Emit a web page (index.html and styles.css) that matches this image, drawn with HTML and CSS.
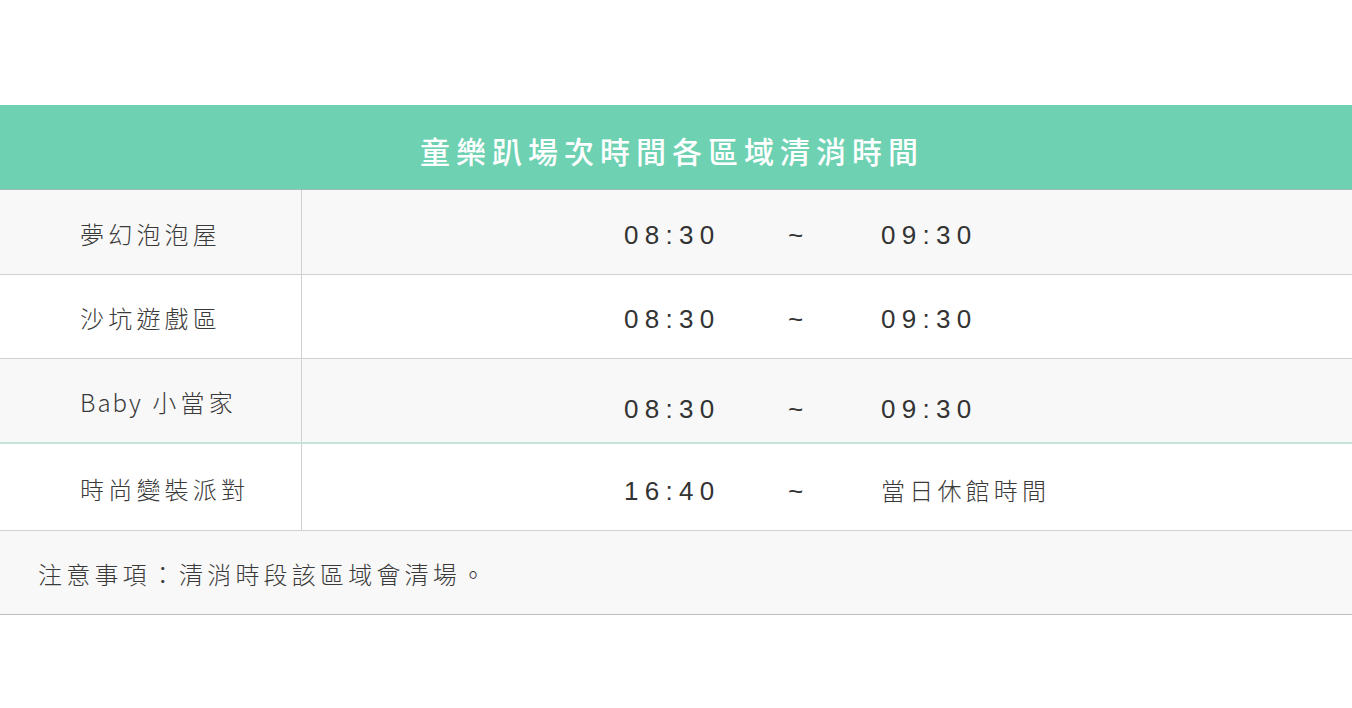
FILE: index.html
```html
<!DOCTYPE html>
<html lang="zh-Hant">
<head>
<meta charset="utf-8">
<title>童樂趴場次時間各區域清消時間</title>
<link rel="stylesheet" href="styles.css">
</head>
<body>
<div class="page">
  <div class="table">
    <div class="head">童樂趴場次時間各區域清消時間</div>
    <div class="row grey r1">
      <div class="name">夢幻泡泡屋</div>
      <div class="time"><span class="t start">08:30</span><span class="t tilde">~</span><span class="t end">09:30</span></div>
    </div>
    <div class="row r2">
      <div class="name">沙坑遊戲區</div>
      <div class="time"><span class="t start">08:30</span><span class="t tilde">~</span><span class="t end">09:30</span></div>
    </div>
    <div class="row grey r3">
      <div class="name"><span class="latin">Baby</span> 小當家</div>
      <div class="time low"><span class="t start">08:30</span><span class="t tilde">~</span><span class="t end">09:30</span></div>
    </div>
    <div class="row r4">
      <div class="name">時尚變裝派對</div>
      <div class="time"><span class="t start">16:40</span><span class="t tilde">~</span><span class="end cjk">當日休館時間</span></div>
    </div>
    <div class="note">注意事項：清消時段該區域會清場。</div>
  </div>
</div>
</body>
</html>
```

FILE: styles.css
```css
html, body {
  margin: 0;
  padding: 0;
  background: #ffffff;
}
.page {
  padding-top: 105px;
  width: 1352px;
}
.table {
  display: flex;
  flex-direction: column;
}
.head {
  background: #6dd1b2;
  border-bottom: 1px solid #9fbdb3;
  color: #ffffff;
  font-family: "Noto Sans CJK TC", sans-serif;
  font-weight: 500;
  font-size: 30px;
  letter-spacing: 6px;
  display: flex;
  align-items: center;
  justify-content: center;
  padding-top: 5px;
  box-sizing: border-box;
  height: 85px;
  padding-right: 8px;
}
.row {
  display: grid;
  grid-template-columns: 302px 1fr;
  border-bottom: 1px solid #d0d0d0;
  background: #ffffff;
}
.row.grey { background: #f8f8f8; }
.r1 { height: 84px; }
.r2 { height: 83px; }
.r3 { height: 83px; border-bottom: 2px solid #c4e3d9; }
.r4 { height: 86px; }
.name {
  border-right: 1px solid #d0d0d0;
  display: flex;
  align-items: center;
  padding-left: 80px;
  font-family: "Noto Sans CJK TC", sans-serif;
  font-weight: 300;
  font-size: 24px;
  letter-spacing: 4.2px;
  color: #3a3a3a;
  padding-top: 2px;
  white-space: pre;
}
.latin { letter-spacing: 2px; }
.time {
  display: flex;
  align-items: center;
  padding-left: 322px;
  color: #333333;
  padding-top: 6px;
}
.time.low { padding-top: 18px; }
.r4 .time { padding-top: 8px; }
.t {
  font-family: "Liberation Sans", Arial, sans-serif;
  font-size: 26px;
  letter-spacing: 6.3px;
}
.start { width: 162px; }
.tilde { width: 95px; padding-left: 2px; box-sizing: border-box; }
.cjk {
  font-family: "Noto Sans CJK TC", sans-serif;
  font-weight: 300;
  font-size: 24px;
  letter-spacing: 4.2px;
  color: #3a3a3a;
  margin-top: -3px;
}
.note {
  height: 84px;
  background: #f8f8f8;
  border-bottom: 1px solid #bcbcbc;
  display: flex;
  align-items: center;
  padding-left: 38px;
  padding-top: 2px;
  box-sizing: border-box;
  font-family: "Noto Sans CJK TC", sans-serif;
  font-weight: 300;
  font-size: 24px;
  letter-spacing: 4.2px;
  color: #3a3a3a;
}
```
